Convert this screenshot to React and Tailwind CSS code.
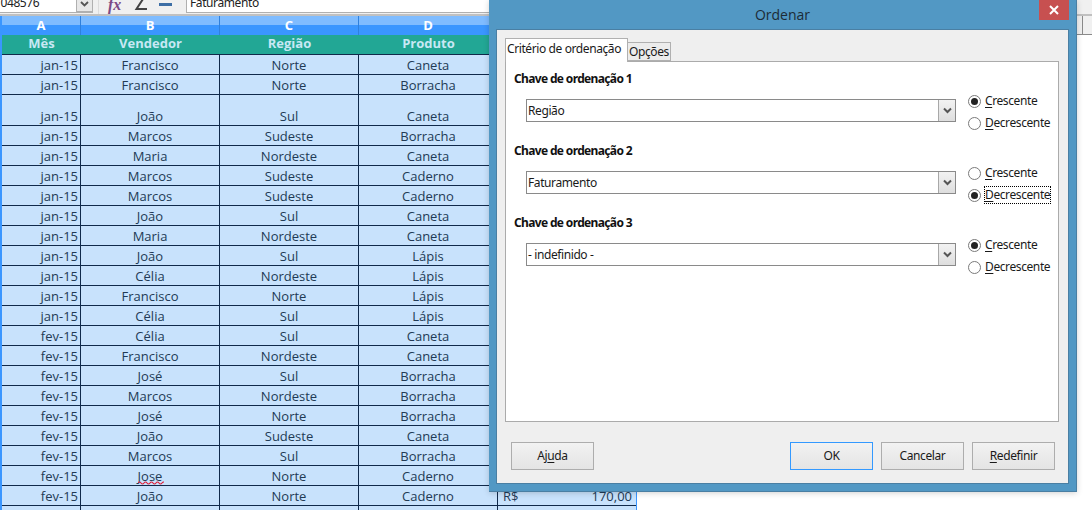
import React from "react";

const rows = [
  ["jan-15", "Francisco", "Norte", "Caneta"],
  ["jan-15", "Francisco", "Norte", "Borracha"],
  ["jan-15", "João", "Sul", "Caneta", true],
  ["jan-15", "Marcos", "Sudeste", "Borracha"],
  ["jan-15", "Maria", "Nordeste", "Caneta"],
  ["jan-15", "Marcos", "Sudeste", "Caderno"],
  ["jan-15", "Marcos", "Sudeste", "Caderno"],
  ["jan-15", "João", "Sul", "Caneta"],
  ["jan-15", "Maria", "Nordeste", "Caneta"],
  ["jan-15", "João", "Sul", "Lápis"],
  ["jan-15", "Célia", "Nordeste", "Lápis"],
  ["jan-15", "Francisco", "Norte", "Lápis"],
  ["jan-15", "Célia", "Sul", "Lápis"],
  ["fev-15", "Célia", "Sul", "Caneta"],
  ["fev-15", "Francisco", "Nordeste", "Caneta"],
  ["fev-15", "José", "Sul", "Borracha"],
  ["fev-15", "Marcos", "Nordeste", "Borracha"],
  ["fev-15", "José", "Norte", "Borracha"],
  ["fev-15", "João", "Sudeste", "Caneta"],
  ["fev-15", "Marcos", "Sul", "Borracha"],
  ["fev-15", "Jose", "Norte", "Caderno"],
  ["fev-15", "João", "Norte", "Caderno"],
];

const cols = "grid grid-cols-[79px_139px_139px_139px_138px] w-[634px]";

function Row({ r, i }) {
  const tall = r[4];
  const h = tall ? "h-[31px]" : "h-[20px]";
  const cell = `${h} border-b border-r border-[#10294a] flex items-end justify-center leading-[17px]`;
  return (
    <div className={cols}>
      <div className={`${h} border-b border-r border-[#10294a] flex items-end justify-end pr-[2px] leading-[17px]`}>{r[0]}</div>
      <div className={cell}>
        {r[1] === "Jose" ? (
          <span className="relative">
            {r[1]}
            <svg className="absolute left-0 top-[13px]" width="26" height="4" viewBox="0 0 26 4">
              <path d="M0 2 Q1.5 0 3 2 T6 2 T9 2 T12 2 T15 2 T18 2 T21 2 T24 2 T27 2" fill="none" stroke="#e0203a" strokeWidth="1.2" />
            </svg>
          </span>
        ) : (
          r[1]
        )}
      </div>
      <div className={cell}>{r[2]}</div>
      <div className={cell}>{r[3]}</div>
      <div className={`${h} border-b border-[#10294a] flex items-end justify-between pl-[5px] pr-[4px] leading-[17px]`}>
        {i === 21 && (
          <>
            <span>R$</span>
            <span>170,00</span>
          </>
        )}
      </div>
    </div>
  );
}

function Radio({ checked, label, focus }) {
  const first = label[0];
  return (
    <div className="flex items-center h-[22px]">
      <span className="w-[13px] h-[13px] rounded-full border border-[#7a7a7a] bg-white flex items-center justify-center shrink-0">
        {checked && <span className="w-[7px] h-[7px] rounded-full bg-[#222222]" />}
      </span>
      <span className={`ml-[4px] leading-[16px] whitespace-nowrap ${focus ? "outline-1 outline-dotted outline-black" : ""}`}>
        <span className="underline underline-offset-2">{first}</span>
        {label.slice(1)}
      </span>
    </div>
  );
}

function Section({ title, value, order }) {
  return (
    <div className="h-[72px]">
      <div className="pl-[8px] pt-[9px] font-bold tracking-[-0.65px] leading-[16px] text-[#111111]">{title}</div>
      <div className="flex mt-[12px] pl-[20px]">
        <div className="w-[430px] h-[23px] border border-[#8a8a8a] flex items-center bg-white">
          <span className="flex-1 pl-[1px] leading-none">{value}</span>
          <span className="w-[17px] h-[21px] bg-gradient-to-b from-[#f2f2f2] to-[#dedede] border-l border-[#a8a8a8] flex items-center justify-center">
            <svg width="9" height="7" viewBox="0 0 9 7">
              <path d="M1 1.5 L4.5 5 L8 1.5" fill="none" stroke="#555555" strokeWidth="2" />
            </svg>
          </span>
        </div>
        <div className="ml-[12px] mt-[-9px]">
          <Radio checked={order === 0} label="Crescente" />
          <Radio checked={order === 1} label="Decrescente" focus={order === 1} />
        </div>
      </div>
    </div>
  );
}

function Btn({ children, className = "" }) {
  return (
    <div
      className={`w-[83px] h-[28px] shrink-0 border bg-gradient-to-b from-[#f2f2f2] to-[#e4e4e4] flex items-center justify-center ${className}`}
    >
      {children}
    </div>
  );
}

function Dialog() {
  return (
    <div className="absolute left-[489px] top-0 w-[588px] h-[492px] bg-[#5298c4] border-r border-b border-[#4a7fa3] shadow-[0_1px_6px_rgba(0,0,0,0.18)] flex flex-col font-['Noto_Sans','Open_Sans',sans-serif] text-[12px] tracking-[-0.4px] text-[#1a1a1a]">
      <div className="h-[29px] relative flex items-start justify-center shrink-0">
        <span className="text-[14px] tracking-normal leading-[30px] text-[#1c2b36] font-['Open_Sans',sans-serif]">Ordenar</span>
        <div className="absolute right-[7px] top-0 w-[30px] h-[20px] bg-[#c75050] flex items-center justify-center">
          <svg width="10" height="10" viewBox="0 0 10 10">
            <path d="M1 1 L9 9 M9 1 L1 9" stroke="white" strokeWidth="2" />
          </svg>
        </div>
      </div>
      <div className="ml-[7px] mr-[7px] mb-[7px] flex-1 bg-[#efefef] border border-[#4a7fa3] flex flex-col pl-[8px]">
        <div className="flex h-[31px] items-end">
          <div className="w-[123px] h-[24px] bg-white border border-b-0 border-[#b0b0b0] pl-[1px] leading-[20px] whitespace-nowrap relative z-10 mb-[-1px]">
            Critério de ordenação
          </div>
          <div className="w-[43px] h-[19px] bg-[#ececec] border border-l-0 border-[#b0b0b0] pl-[1px] leading-[18px] whitespace-nowrap">
            Opções
          </div>
        </div>
        <div className="w-[554px] h-[361px] bg-white border border-[#ababab]">
          <Section title="Chave de ordenação 1" value="Região" order={0} />
          <Section title="Chave de ordenação 2" value="Faturamento" order={1} />
          <Section title="Chave de ordenação 3" value="- indefinido -" order={0} />
        </div>
        <div className="flex mt-[20px] gap-[8px] pl-[6px]">
          <Btn className="border-[#adadad] mr-[188px]">
            <span>
              Aj<span className="underline underline-offset-2">u</span>da
            </span>
          </Btn>
          <Btn className="border-[#3399ff]">OK</Btn>
          <Btn className="border-[#adadad]">Cancelar</Btn>
          <Btn className="border-[#adadad]">
            <span>
              <span className="underline underline-offset-2">R</span>edefinir
            </span>
          </Btn>
        </div>
      </div>
    </div>
  );
}

export default function App() {
  return (
    <div className="relative w-[1092px] h-[510px] overflow-hidden bg-white font-['Open_Sans',sans-serif]">
      <div className="h-[16px] bg-[#f0f0f0] border-b-2 border-[#c0c0c0] flex overflow-hidden font-['Noto_Sans',sans-serif] tracking-[-0.4px]">
        <div className="w-[93px] h-[13px] bg-white flex relative border-b border-[#b0b0b0] overflow-hidden">
          <span className="text-[12px] leading-[6px] text-[#222222] ml-[-6px]">1048576</span>
          <div className="absolute right-0 top-[-4px] w-[17px] h-[16px] bg-[#e8e8e8] border border-[#b0b0b0] flex items-center justify-center">
            <svg width="9" height="6" viewBox="0 0 9 6">
              <path d="M1 1 L4.5 4.5 L8 1" fill="none" stroke="#555555" strokeWidth="1.8" />
            </svg>
          </div>
        </div>
        <div className="w-[93px] relative flex items-start pl-[9px] border-l-[1px] border-[#dcdcdc] ml-[5px] mr-[-5px]">
          <span className="text-[16px] tracking-normal leading-[10px] italic font-bold text-[#7c4a86] font-['Liberation_Serif',serif]">fx</span>
          <svg className="ml-[13px]" width="13" height="11" viewBox="0 0 13 11">
            <path d="M9 -1 L2.5 9 L13 9" fill="none" stroke="#444444" strokeWidth="2" />
          </svg>
          <span className="w-[13px] h-[3px] bg-[#3d6ea5] mt-[3px] ml-[12px]" />
        </div>
        <div className="w-[304px] h-[13px] bg-white border-l border-b border-[#b0b0b0] pl-[3px] text-[12px] leading-[6px] text-[#222222]">
          Faturamento
        </div>
      </div>
      <div className="flex text-[13px] text-[#223a55]">
        <div className="w-[2px] bg-[#3a96ff] h-[494px]" />
        <div className="flex flex-col">
          <div className={`${cols} h-[19px] bg-gradient-to-b from-[#7fbcff] from-50% to-[#3a96ff] to-50% text-white font-bold text-[13px]`}>
            {["A", "B", "C", "D", ""].map((c, i) => (
              <div key={i} className={`flex items-center justify-center leading-none ${i < 4 ? "border-r border-[#2f80dd]" : ""}`}>
                {c}
              </div>
            ))}
          </div>
          <div className={`${cols} h-[20px] bg-[#22a795] text-[#c8e8f4] font-bold border-b border-[#10294a]`}>
            {["Mês", "Vendedor", "Região", "Produto", ""].map((c, i) => (
              <div key={i} className="flex items-center justify-center leading-none pb-[2px]">
                {c}
              </div>
            ))}
          </div>
          <div className="bg-[#c8e2fc]">
            {rows.map((r, i) => (
              <Row key={i} r={r} i={i} />
            ))}
            <div className={`${cols} h-[6px]`}>
              <div className="border-r border-[#10294a]" />
              <div className="border-r border-[#10294a]" />
              <div className="border-r border-[#10294a]" />
              <div className="border-r border-[#10294a]" />
              <div />
            </div>
          </div>
        </div>
        <div className="w-[1px] h-[494px] bg-[#3a96ff]" />
        <div className="flex-1 flex justify-end">
          <div className="w-[15px] h-[19px] bg-[#f0f0f0] border-b border-[#8a8a8a] flex">
            <div className="w-[6px] border-r border-[#8a8a8a]" />
          </div>
        </div>
      </div>
      <Dialog />
    </div>
  );
}
